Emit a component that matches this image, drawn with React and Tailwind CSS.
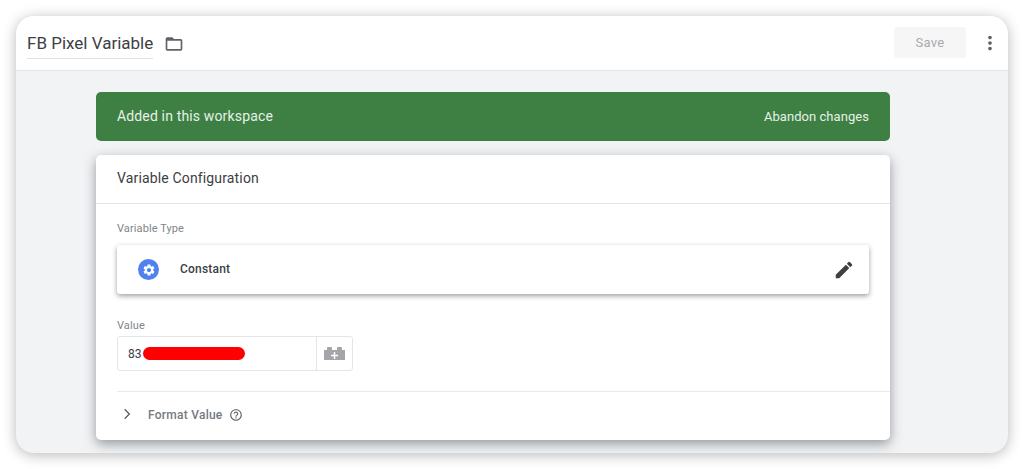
export default function App() {
  return (
    <div className="w-[1024px] h-[469px] bg-white pt-4 px-4 pb-4 font-['Roboto',sans-serif] overflow-hidden">
      <div className="h-[437px] rounded-[18px] bg-[#f1f3f5] shadow-[0_2px_14px_rgba(0,0,0,0.28)] overflow-hidden flex flex-col">
        <header className="h-[55px] shrink-0 bg-white border-b border-[#e3e5e8] flex items-center pl-[11px] pr-[7px]">
          <div className="h-[29px] flex items-center border-b border-[#dfe1e5] mt-[2px]">
            <span className="text-[17px] text-[#3c4043] leading-none">FB Pixel Variable</span>
          </div>
          <svg className="ml-[11px] w-[20px] h-[20px] mt-[1px]" viewBox="0 0 24 24" fill="#5f6368">
            <path d="M20 6h-8l-2-2H4c-1.1 0-2 .9-2 2v12c0 1.1.9 2 2 2h16c1.1 0 2-.9 2-2V8c0-1.1-.9-2-2-2zm0 12H4V8h16v10z" />
          </svg>
          <button className="ml-auto w-[72px] h-[31px] rounded-[3px] bg-[#f6f6f6] text-[13px] font-normal text-[#a8abae] tracking-[0.3px] mb-[1px]">Save</button>
          <svg className="ml-[13px] w-[22px] h-[22px]" viewBox="0 0 24 24" fill="#5f6368">
            <path d="M12 8c1.1 0 2-.9 2-2s-.9-2-2-2-2 .9-2 2 .9 2 2 2zm0 2c-1.1 0-2 .9-2 2s.9 2 2 2 2-.9 2-2-.9-2-2-2zm0 6c-1.1 0-2 .9-2 2s.9 2 2 2 2-.9 2-2-.9-2-2-2z" />
          </svg>
        </header>
        <main className="flex-1 pl-[80px] pr-[118px] pt-[21px]">
          <div className="h-[49px] rounded-[5px] bg-[#3e8044] flex items-center justify-between pl-[21px] pr-[21px] text-[#e6f0e7]">
            <span className="text-[14px] tracking-[0.15px]">Added in this workspace</span>
            <span className="text-[13px] font-normal tracking-[0.05px]">Abandon changes</span>
          </div>
          <section className="mt-[14px] h-[285px] bg-white rounded-[5px] shadow-[0_4px_12px_rgba(60,64,67,0.5)]">
            <div className="h-[49px] flex items-center pl-[21px] border-b border-[#e3e5e8]">
              <span className="text-[14px] text-[#3c4043] tracking-[0.15px] mb-[1px]">Variable Configuration</span>
            </div>
            <div className="pl-[21px] pr-[21px] pt-[18px]">
              <div className="text-[11px] leading-[14px] text-[#80868b] tracking-[0.1px]">Variable Type</div>
              <div className="mt-[9px] h-[49px] rounded-[3px] bg-white shadow-[0_2px_5px_rgba(60,64,67,0.5)] flex items-center pl-[21px] pr-[14px]">
                <span className="w-[21px] h-[21px] rounded-full bg-[#4f82ee] flex items-center justify-center">
                  <svg className="w-[14px] h-[14px]" viewBox="0 0 24 24" fill="#ffffff">
                    <path d="M19.14 12.94c.04-.3.06-.61.06-.94 0-.32-.02-.64-.07-.94l2.03-1.58a.49.49 0 0 0 .12-.61l-1.92-3.32a.488.488 0 0 0-.59-.22l-2.39.96c-.5-.38-1.03-.7-1.62-.94l-.36-2.54a.484.484 0 0 0-.48-.41h-3.84c-.24 0-.43.17-.47.41l-.36 2.54c-.59.24-1.13.57-1.62.94l-2.39-.96c-.22-.08-.47 0-.59.22L2.74 8.87c-.12.21-.08.47.12.61l2.03 1.58c-.05.3-.09.63-.09.94s.02.64.07.94l-2.03 1.58a.49.49 0 0 0-.12.61l1.92 3.32c.12.22.37.29.59.22l2.39-.96c.5.38 1.03.7 1.62.94l.36 2.54c.05.24.24.41.48.41h3.84c.24 0 .44-.17.47-.41l.36-2.54c.59-.24 1.13-.56 1.62-.94l2.39.96c.22.08.47 0 .59-.22l1.92-3.32c.12-.22.07-.47-.12-.61l-2.01-1.58zM12 15.6c-1.98 0-3.6-1.62-3.6-3.6s1.62-3.6 3.6-3.6 3.6 1.62 3.6 3.6-1.62 3.6-3.6 3.6z" />
                  </svg>
                </span>
                <span className="ml-[21px] mb-[1px] text-[12px] font-medium text-[#3c4043] tracking-[0.2px]">Constant</span>
                <svg className="ml-auto w-[22px] h-[22px]" viewBox="0 0 24 24" fill="#3c4043">
                  <path d="M3 17.25V21h3.75L17.81 9.94l-3.75-3.75L3 17.25zM20.71 7.04a1 1 0 0 0 0-1.41l-2.34-2.34a1 1 0 0 0-1.41 0l-1.83 1.83 3.75 3.75 1.83-1.83z" />
                </svg>
              </div>
              <div className="mt-[25px] text-[11px] leading-[14px] text-[#80868b] tracking-[0.1px]">Value</div>
              <div className="mt-[3px] w-[236px] h-[35px] rounded-[3px] border border-[#e3e5e8] flex">
                <div className="w-[199px] flex items-center pl-[10px] border-r border-[#e3e5e8]">
                  <span className="text-[12px] text-[#3c4043]">83</span>
                  <span className="ml-[1px] w-[102px] h-[13px] rounded-full bg-[#ff0000]"></span>
                </div>
                <div className="flex-1 flex items-center justify-center">
                  <svg className="w-[21px] h-[13px]" viewBox="0 0 21 13" fill="#a3a5a8">
                    <path d="M0 3h3V1a1 1 0 0 1 1-1h3a1 1 0 0 1 1 1v2h5V1a1 1 0 0 1 1-1h3a1 1 0 0 1 1 1v2h3v10H0z" />
                    <path d="M9.75 5h1.5v2.75H14v1.5h-2.75V12h-1.5V9.25H7v-1.5h2.75z" fill="#ffffff" />
                  </svg>
                </div>
              </div>
            </div>
            <div className="mt-[20px] ml-[21px] border-t border-[#e8eaed] h-[45px] flex items-center">
              <svg className="ml-[3px] w-[14px] h-[14px] mb-[1px]" viewBox="0 0 24 24" fill="none" stroke="#5f6368" strokeWidth="2.4">
                <path d="M8 4l8 8-8 8" />
              </svg>
              <span className="ml-[14px] text-[12px] font-medium text-[#757a7f] tracking-[0.25px] mt-[1px]">Format Value</span>
              <svg className="ml-[6px] w-[14px] h-[14px] mt-[2px]" viewBox="0 0 24 24" fill="#5f6368">
                <path d="M11 18h2v-2h-2v2zm1-16C6.48 2 2 6.48 2 12s4.48 10 10 10 10-4.48 10-10S17.52 2 12 2zm0 18c-4.41 0-8-3.59-8-8s3.59-8 8-8 8 3.59 8 8-3.59 8-8 8zm0-14c-2.21 0-4 1.79-4 4h2c0-1.1.9-2 2-2s2 .9 2 2c0 2-3 1.75-3 5h2c0-2.25 3-2.5 3-5 0-2.21-1.79-4-4-4z" />
              </svg>
            </div>
          </section>
        </main>
      </div>
    </div>
  );
}
